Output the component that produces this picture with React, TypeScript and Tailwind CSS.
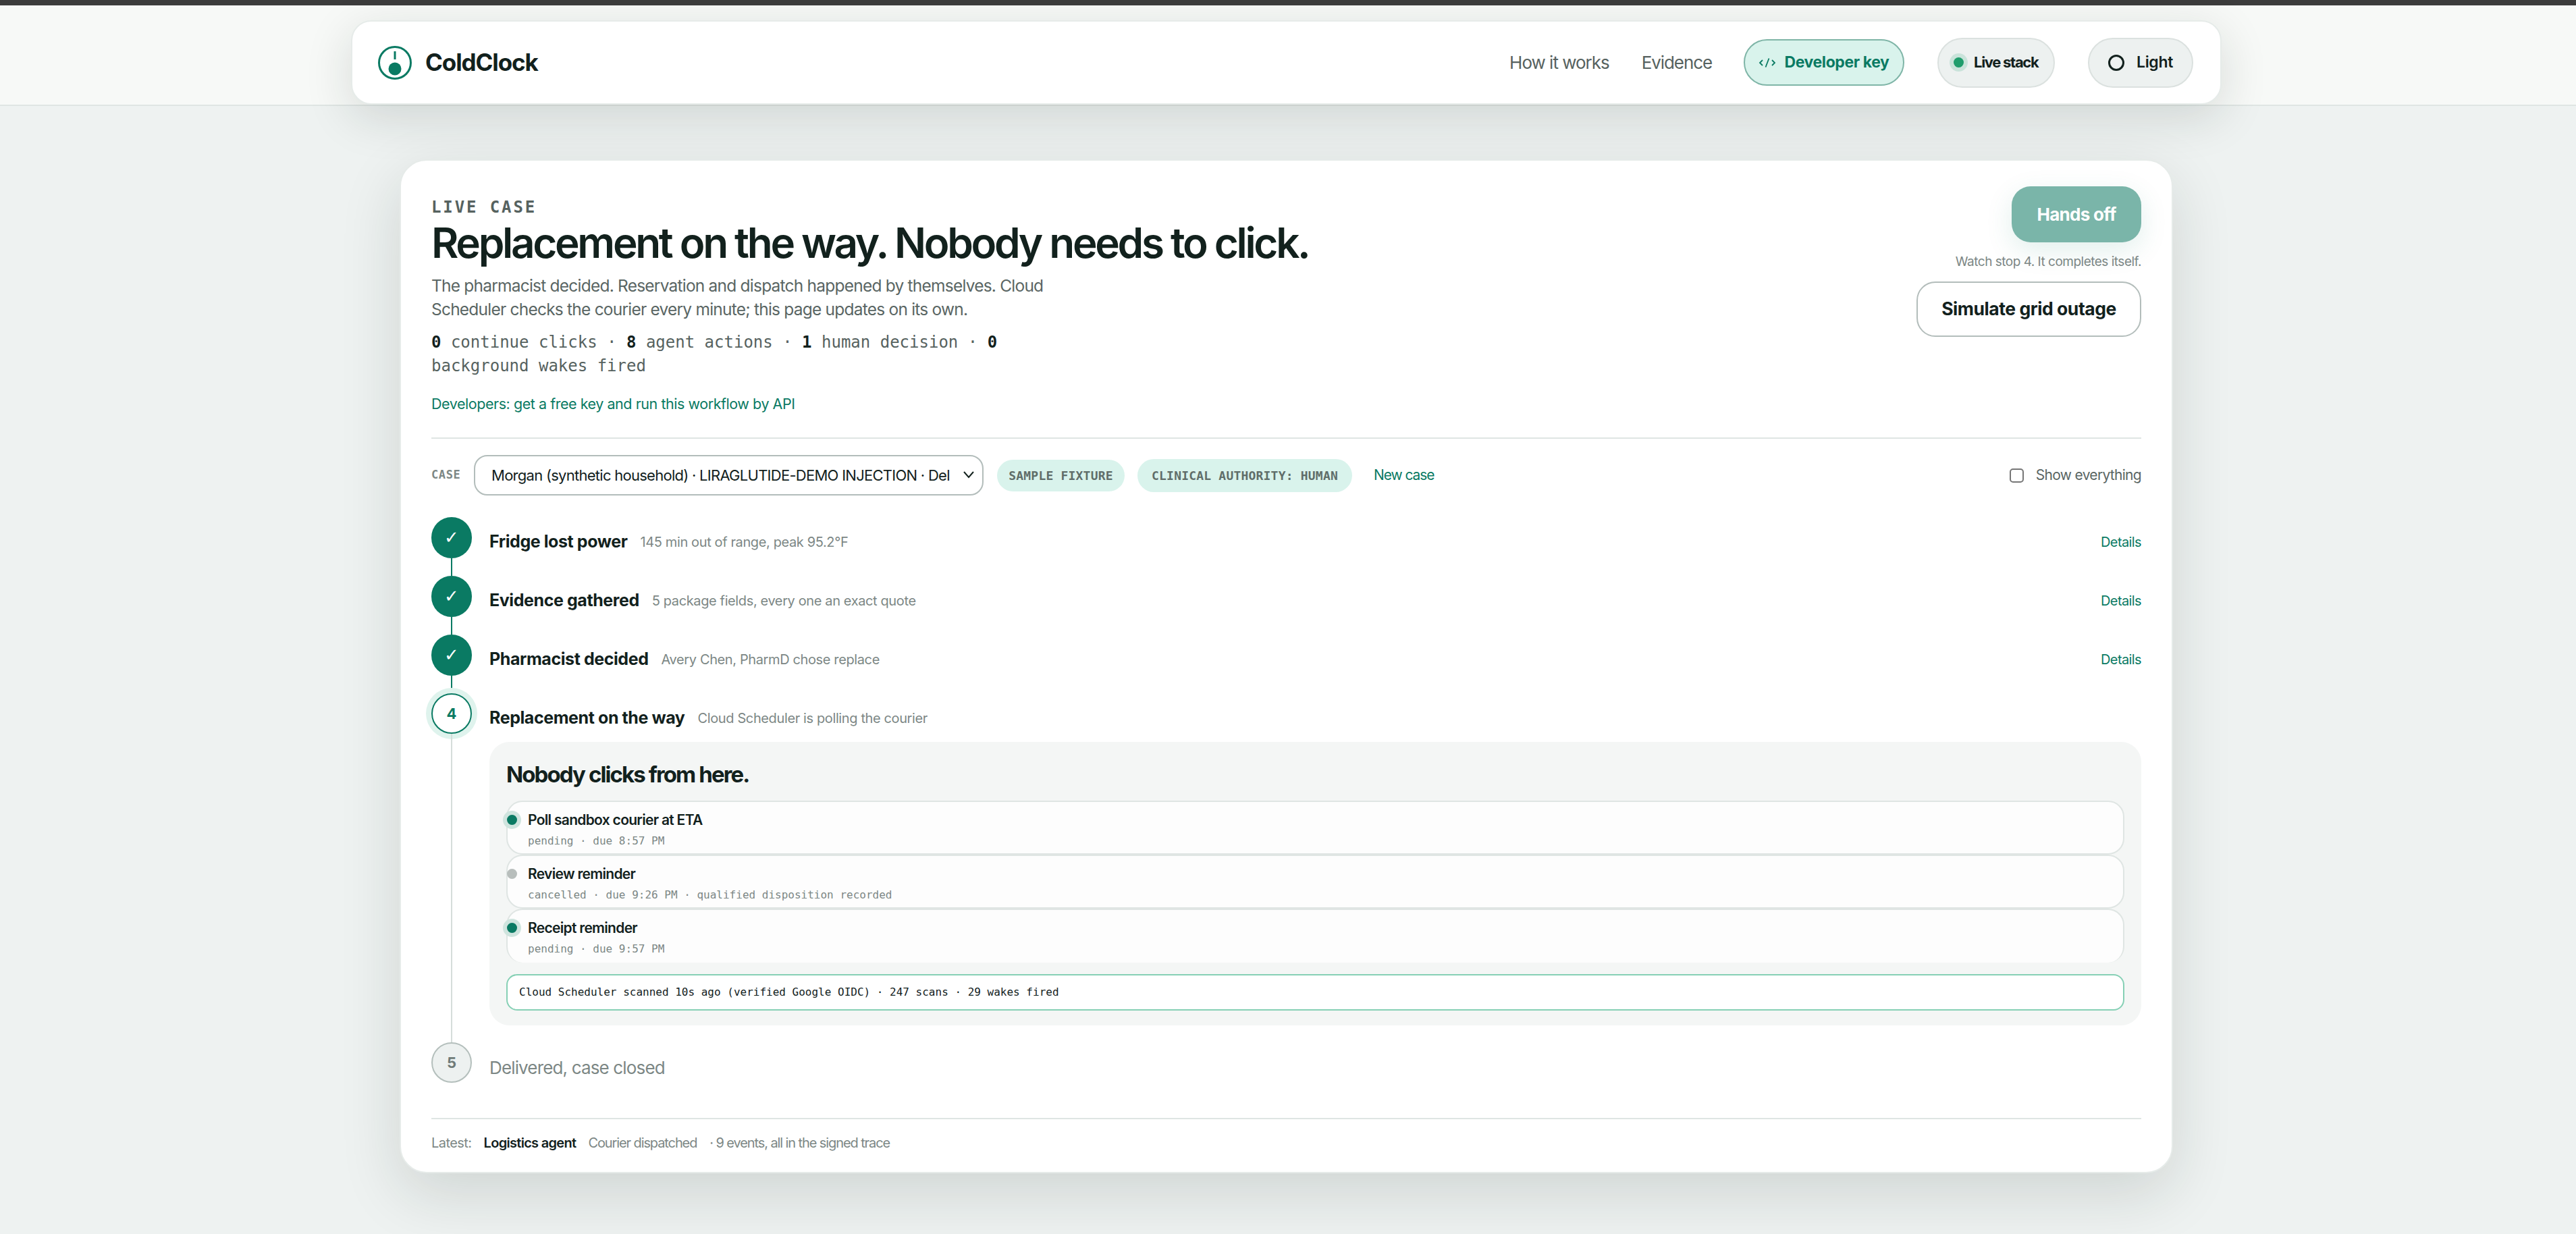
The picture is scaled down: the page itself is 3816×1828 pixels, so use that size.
import React from "react";

const sans = "font-['Inter','Noto_Sans',sans-serif]";
const mono = "font-['DejaVu_Sans_Mono','Liberation_Mono',monospace]";

function Logo() {
  return (
    <svg width="50" height="52" viewBox="0 0 50 52" fill="none" className="shrink-0">
      <circle cx="25" cy="26" r="23.5" stroke="#0a7a63" strokeWidth="3" />
      <line x1="25" y1="9" x2="25" y2="21" stroke="#0a7a63" strokeWidth="3" />
      <circle cx="25" cy="35" r="9.5" fill="#0a7a63" />
    </svg>
  );
}

function Step({
  state,
  n,
  title,
  sub,
  details,
  line,
  children,
}: {
  state: "done" | "active" | "todo";
  n?: number;
  title: string;
  sub?: string;
  details?: boolean;
  line?: "green" | "grey";
  children?: React.ReactNode;
}) {
  return (
    <div className="flex gap-[26px]">
      <div className="w-[60px] shrink-0 flex flex-col items-center">
        {state === "done" && (
          <div className="w-[60px] h-[61px] shrink-0 rounded-full bg-[#0a7a63] text-white flex items-center justify-center text-[26px] font-['DejaVu_Sans',sans-serif]">
            ✓
          </div>
        )}
        {state === "active" && (
          <div className="w-[60px] h-[60px] shrink-0 rounded-full bg-white border-2 border-[#0a7a63] shadow-[0_0_0_8px_#dff3ed] text-[#0a7a63] flex items-center justify-center text-[22px] font-bold">
            {n}
          </div>
        )}
        {state === "todo" && (
          <div className="w-[60px] h-[60px] shrink-0 rounded-full bg-[#edf1f0] border-2 border-[#b4bfbc] text-[#6f7b78] flex items-center justify-center text-[22px] font-bold">
            {n}
          </div>
        )}
        {line === "green" && <div className="w-[2px] h-[26px] bg-[#0a7a63]" />}
        {line === "grey" && <div className="w-[2px] flex-1 bg-[#d5ddda]" />}
      </div>
      <div className="flex-1 min-w-0">
        <div className="h-[72px] pt-[2px] flex items-center">
          <span
            className={
              state === "todo"
                ? "text-[26px] tracking-[-0.85px] text-[#7c8785]"
                : "text-[25px] font-bold tracking-[-0.42px] text-[#12211d]"
            }
          >
            {title}
          </span>
          {sub && <span className="ml-[19px] text-[20px] tracking-[-0.38px] text-[#7c8785]">{sub}</span>}
          {details && <span className="ml-auto text-[20px] tracking-[-0.6px] text-[#0a7a63]">Details</span>}
        </div>
        {children}
      </div>
    </div>
  );
}

function Job({
  title,
  meta,
  active,
  last,
}: {
  title: string;
  meta: string;
  active: boolean;
  last?: boolean;
}) {
  return (
    <div
      className={
        "relative h-[80px] rounded-[24px] bg-[#fdfdfd] border-l-2 border-t-2 border-r-2 border-[#dfe5e3] pl-[30px] pt-[13px] " +
        (last ? "border-b-0" : "border-b-2")
      }
    >
      <span
        className={
          "absolute left-[-1px] top-[19px] w-[15px] h-[15px] rounded-full " +
          (active ? "bg-[#0a7a63] shadow-[0_0_0_6px_#cfe4de]" : "bg-[#b8bebc]")
        }
      />
      <div className="text-[21px] leading-[28px] font-semibold tracking-[-0.7px] text-[#12211d]">{title}</div>
      <div className={mono + " text-[16px] leading-[22px] mt-[6px] text-[#7c8785]"}>{meta}</div>
    </div>
  );
}

export default function App() {
  return (
    <div className={sans + " min-h-screen bg-[#eef2f1] text-[#12211d] overflow-hidden"}>
      <div className="h-2 bg-[#3c3c3c]" />
      <header className="h-[149px] bg-[#f7f9f7] border-b-2 border-[#dfe5e3] pt-[22px] pl-[520px] pr-[525px]">
        <nav className="h-[125px] rounded-[30px] bg-white border-2 border-[#e6ebe9] shadow-[0_18px_70px_rgba(18,33,29,0.14)] flex items-center pl-[38px] pr-[40px]">
          <Logo />
          <span className="ml-[20px] text-[35px] font-bold tracking-[-1.1px]">ColdClock</span>
          <a className="ml-auto text-[26px] tracking-[-1px] text-[#56625f]">How it works</a>
          <a className="ml-[48px] text-[26px] tracking-[-1.1px] text-[#56625f]">Evidence</a>
          <div className="ml-[47px] h-[69px] w-[238px] rounded-full bg-[#d9f3ec] border-2 border-[#7fb5a7] flex items-center justify-center gap-[12px] text-[#0a7a63] text-[23px] font-bold tracking-[-0.4px]">
            <svg width="26" height="16" viewBox="0 0 26 16" fill="none" stroke="#0a7a63" strokeWidth="1.8">
              <path d="M6 4 2 8l4 4M20 4l4 4-4 4M15.5 1.5l-5 13" />
            </svg>
            Developer key
          </div>
          <div className="ml-[49px] h-[74px] w-[174px] rounded-full bg-[#edf1f0] border-2 border-[#dbe1df] flex items-center pl-[16px] gap-[9px] text-[22px] font-bold tracking-[-1.3px]">
            <span className="w-[15px] h-[15px] rounded-full bg-[#1f9d6c] shadow-[0_0_0_6px_#c9e3da] ml-[6px]" />
            <span className="ml-[6px]">Live stack</span>
          </div>
          <div className="ml-[49px] h-[74px] w-[156px] rounded-full bg-[#edf1f0] border-2 border-[#dbe1df] flex items-center justify-center gap-[18px] text-[23px] font-semibold tracking-[-0.3px]">
            <span className="w-[24px] h-[24px] rounded-full border-[3px] border-[#12211d]" />
            Light
          </div>
        </nav>
      </header>

      <main className="pt-[79px] pb-[90px] pl-[592px] pr-[597px]">
        <section className="h-[1502px] rounded-[40px] bg-white border-2 border-[#e6ebe9] shadow-[0_30px_90px_rgba(18,33,29,0.14)] px-[45px] pt-[56px]">
          <div className="flex justify-between h-[356px] border-b-2 border-[#dfe5e3]">
            <div>
              <div className={mono + " text-[24px] leading-[26px] font-semibold tracking-[2.9px] text-[#56625f]"}>LIVE CASE</div>
              <h1 className="mt-[4px] text-[62px] leading-[72px] font-semibold tracking-[-3.32px] text-[#12211d] whitespace-nowrap">
                Replacement on the way. Nobody needs to click.
              </h1>
              <p className="mt-[10px] w-[960px] text-[24.5px] leading-[35px] tracking-[-0.78px] text-[#5a6664]">
                The pharmacist decided. Reservation and dispatch happened by themselves. Cloud Scheduler checks the courier every minute; this page updates on its own.
              </p>
              <p className={mono + " mt-[14px] w-[900px] text-[24px] leading-[35px] text-[#56625f]"}>
                <b className="text-[#12211d]">0</b> continue clicks · <b className="text-[#12211d]">8</b> agent actions · <b className="text-[#12211d]">1</b> human decision · <b className="text-[#12211d]">0</b> background wakes fired
              </p>
              <a className="block mt-[23px] text-[21.5px] leading-[30px] tracking-[-0.45px] text-[#0a7a63]">
                Developers: get a free key and run this workflow by API
              </a>
            </div>
            <div className="flex flex-col items-end">
              <button className="mt-[-18px] w-[192px] h-[83px] rounded-[28px] bg-[#7ab5a9] text-white text-[26px] font-bold tracking-[-0.7px] shadow-[0_12px_40px_rgba(10,122,99,0.12)]">
                Hands off
              </button>
              <div className="mt-[17px] text-[19px] leading-[24px] tracking-[-0.5px] text-[#7c8785]">Watch stop 4. It completes itself.</div>
              <button className="mt-[17px] w-[333px] h-[82px] rounded-[28px] bg-white border-2 border-[#b3bdbb] text-[#12211d] text-[26.5px] font-bold tracking-[-0.45px]">
                Simulate grid outage
              </button>
            </div>
          </div>

          <div className="h-[116px] pb-[8px] flex items-center">
            <span className={mono + " text-[17px] font-bold tracking-[0.6px] text-[#7c8785] w-[63px]"}>CASE</span>
            <div className="relative w-[755px] h-[60px] rounded-[20px] bg-white border-2 border-[#b3bdbb] pl-[24px] pr-[46px] flex items-center text-[22px] tracking-[-0.73px] whitespace-nowrap">
              <span>Morgan (synthetic household) · LIRAGLUTIDE-DEMO INJECTION · Del</span>
              <svg className="absolute right-[10px] top-[20px]" width="20" height="14" viewBox="0 0 20 14" fill="none" stroke="#12211d" strokeWidth="2">
                <path d="m3 3 7 8 7-8" />
              </svg>
            </div>
            <span className={mono + " ml-[20px] w-[189px] h-[47px] rounded-full bg-[#d9f3ec] flex items-center justify-center text-[18px] font-bold tracking-[0.2px] text-[#5f6d69]"}>SAMPLE FIXTURE</span>
            <span className={mono + " ml-[19px] w-[318px] h-[49px] rounded-full bg-[#d9f3ec] flex items-center justify-center text-[18px] font-bold tracking-[0.2px] text-[#5f6d69]"}>CLINICAL AUTHORITY: HUMAN</span>
            <span className="ml-[32px] text-[21px] tracking-[-1.1px] text-[#0a7a63]">New case</span>
            <span className="ml-auto w-[21px] h-[21px] rounded-[5px] border-2 border-[#767676] bg-white" />
            <span className="ml-[18px] text-[21px] tracking-[-0.7px] text-[#5a6664]">Show everything</span>
          </div>

          <div>
            <Step state="done" title="Fridge lost power" sub="145 min out of range, peak 95.2°F" details line="green" />
            <Step state="done" title="Evidence gathered" sub="5 package fields, every one an exact quote" details line="green" />
            <Step state="done" title="Pharmacist decided" sub="Avery Chen, PharmD chose replace" details line="green" />
            <Step state="active" n={4} title="Replacement on the way" sub="Cloud Scheduler is polling the courier" line="grey">
              <div className="mb-[25px] h-[420px] rounded-[30px] bg-[#f4f6f5] px-[25px] pt-[26px]">
                <h2 className="text-[33px] leading-[44px] font-bold tracking-[-1.9px] text-[#12211d]">Nobody clicks from here.</h2>
                <div className="mt-[17px]">
                  <Job active title="Poll sandbox courier at ETA" meta="pending · due 8:57 PM" />
                  <Job active={false} title="Review reminder" meta="cancelled · due 9:26 PM · qualified disposition recorded" />
                  <Job active last title="Receipt reminder" meta="pending · due 9:57 PM" />
                </div>
                <div className={mono + " mt-[17px] h-[54px] rounded-[16px] bg-white border-2 border-[#86d0b5] pl-[17px] flex items-center text-[16px] text-[#12211d]"}>
                  Cloud Scheduler scanned 10s ago (verified Google OIDC) · 247 scans · 29 wakes fired
                </div>
              </div>
            </Step>
            <Step state="todo" n={5} title="Delivered, case closed" />
          </div>

          <div className="mt-[40px] border-t-2 border-[#dfe5e3] pt-[21px] flex items-center text-[20px] leading-[28px] tracking-[-1.1px] text-[#7c8785]">
            <span className="tracking-[-0.55px]">Latest:</span>
            <span className="ml-[18px] font-semibold tracking-[-0.7px] text-[#12211d]">Logistics agent</span>
            <span className="ml-[18px]">Courier dispatched</span>
            <span className="ml-[19px]">· 9 events, all in the signed trace</span>
          </div>
        </section>
      </main>
    </div>
  );
}
